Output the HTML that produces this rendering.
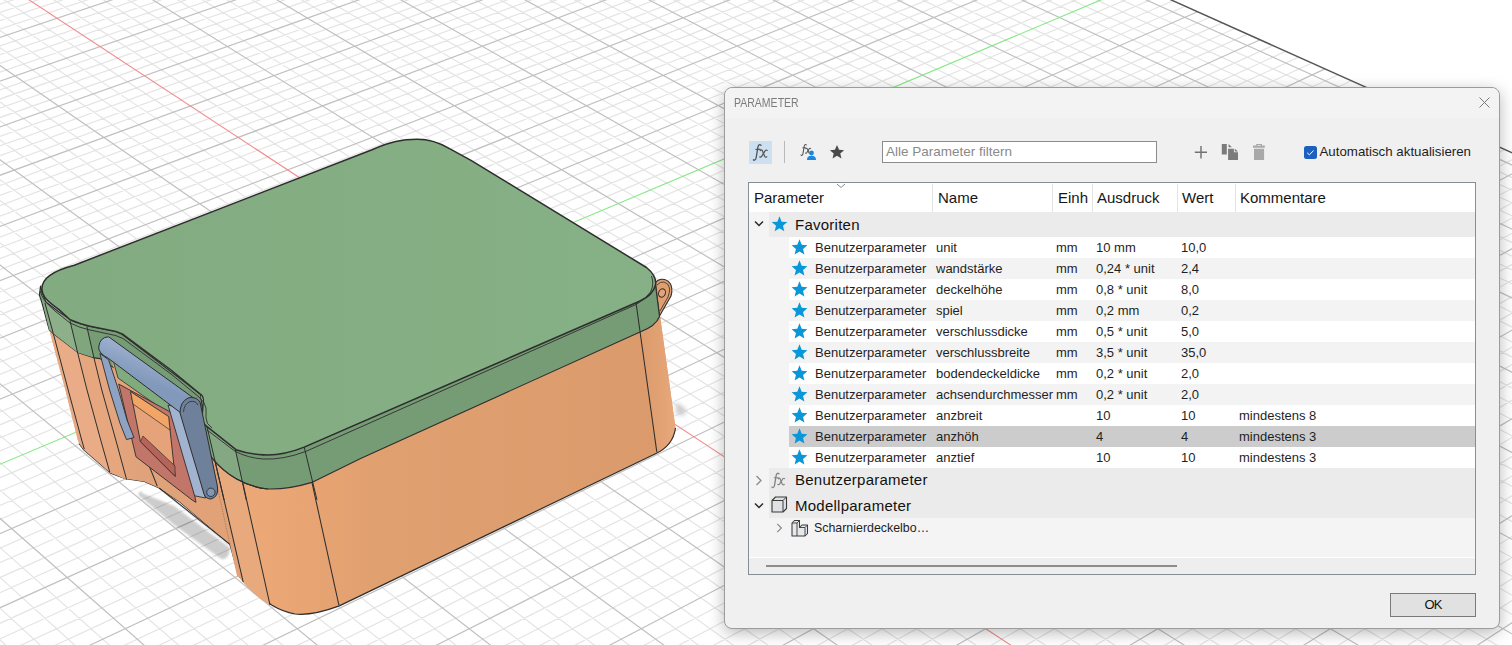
<!DOCTYPE html>
<html><head><meta charset="utf-8"><style>
html,body{margin:0;padding:0;width:1512px;height:645px;overflow:hidden;background:#fff;font-family:"Liberation Sans",sans-serif}
.ab{position:absolute}
svg.ab{overflow:visible}
.scene{position:absolute;left:0;top:0}
.dlg .dbox{}
.t13{font-size:13px;line-height:15px;color:#1f1f1f;white-space:nowrap}
.hd{top:189px;font-size:15px;line-height:17px;color:#161616;white-space:nowrap}
.grp{font-size:15px;letter-spacing:0.25px;line-height:18px;color:#121212;white-space:nowrap}
.sep{top:184px;width:1px;height:28px;background:#e3e3e3}
.fx{font-family:"Liberation Serif",serif;font-style:italic;line-height:20px;white-space:nowrap}
.frame{position:absolute;left:724px;top:87px;width:774px;height:540px;background:#f0f0f0;border:1px solid #9c9c9c;border-radius:8px;box-shadow:0 4px 16px rgba(0,0,0,0.28)}
.titlebar{position:absolute;left:725px;top:88px;width:774px;height:30px;background:#f3f3f3;border-radius:8px 8px 0 0}
.title{position:absolute;left:733.5px;top:95.5px;font-size:12.6px;color:#7c7c7c;line-height:14px;transform:scaleX(0.835);transform-origin:0 0;white-space:nowrap}
</style></head><body>
<svg class="scene" width="1512" height="645" viewBox="0 0 1512 645">
<g fill="none" stroke-width="1">
<path d="M-799.1 177.3L592.9 -259.3M-793.1 184.0L601.4 -255.4M-786.9 190.7L610.0 -251.6M-780.8 197.5L618.7 -247.7M-768.3 211.3L636.2 -239.9M-762.0 218.2L645.0 -235.9M-755.6 225.2L653.8 -231.9M-749.2 232.3L662.7 -227.9M-736.3 246.6L680.7 -219.9M-729.7 253.8L689.8 -215.8M-723.1 261.1L698.9 -211.7M-716.5 268.5L708.1 -207.6M-703.0 283.3L726.6 -199.3M-696.2 290.8L735.9 -195.1M-689.3 298.4L745.3 -190.9M-682.4 306.1L754.8 -186.7M-668.4 321.5L773.8 -178.1M-661.3 329.3L783.4 -173.8M-654.1 337.2L793.1 -169.5M-646.9 345.2L802.9 -165.1M-632.3 361.3L822.5 -156.3M-624.9 369.5L832.4 -151.9M-617.4 377.7L842.4 -147.4M-609.9 386.0L852.5 -142.9M-594.7 402.7L872.7 -133.8M-587.0 411.2L882.9 -129.2M-579.2 419.8L893.2 -124.6M-571.4 428.5L903.6 -120.0M-555.5 446.0L924.5 -110.6M-547.5 454.8L935.0 -105.9M-539.4 463.8L945.7 -101.1M-531.2 472.8L956.4 -96.3M-514.6 491.1L977.9 -86.7M-506.2 500.4L988.8 -81.8M-497.7 509.7L999.8 -76.9M-489.2 519.1L1010.8 -71.9M-471.9 538.3L1033.1 -61.9M-463.1 547.9L1044.4 -56.9M-454.2 557.7L1055.7 -51.8M-445.3 567.6L1067.1 -46.7M-427.1 587.6L1090.1 -36.4M-417.9 597.7L1101.7 -31.2M-408.7 608.0L1113.4 -25.9M-399.3 618.3L1125.2 -20.7M-380.3 639.2L1149.0 -10.0M-370.7 649.8L1161.0 -4.6M-361.0 660.6L1173.1 0.8M-351.2 671.4L1185.3 6.3M-331.2 693.4L1209.9 17.3M-321.1 704.5L1222.3 22.9M-310.9 715.7L1234.9 28.5M-300.6 727.1L1247.5 34.1M-279.7 750.2L1272.9 45.6M-269.1 761.8L1285.8 51.3M-258.4 773.7L1298.8 57.1M-247.6 785.6L1311.8 63.0M-225.7 809.8L1338.2 74.8M-214.5 822.1L1351.5 80.8M-203.2 834.5L1365.0 86.8M-191.9 847.1L1378.5 92.9M-168.7 872.6L1405.8 105.1M-157.0 885.5L1419.6 111.3M-145.1 898.6L1433.6 117.6M-133.2 911.8L1447.6 123.8M-108.8 938.7L1475.9 136.5M-96.4 952.4L1490.2 143.0M-83.9 966.1L1504.7 149.4M-71.3 980.1L1519.2 155.9M-45.6 1008.4L1548.6 169.1M-32.5 1022.8L1563.5 175.8M-19.3 1037.4L1578.5 182.5M-6.0 1052.1L1593.6 189.3M21.2 1082.1L1624.1 203.0M35.0 1097.3L1639.5 209.9M49.0 1112.7L1655.1 216.9M63.1 1128.3L1670.8 223.9M91.8 1160.0L1702.5 238.1M106.5 1176.1L1718.5 245.3M121.3 1192.5L1734.7 252.5M136.2 1209.0L1751.0 259.8M166.7 1242.6L1784.0 274.6M182.2 1259.7L1800.7 282.1M197.9 1277.0L1817.5 289.6M213.8 1294.5L1834.5 297.2M246.1 1330.2L1868.8 312.6M262.6 1348.4L1886.1 320.4M279.3 1366.8L1903.7 328.3M296.2 1385.4L1921.3 336.2M330.6 1423.4L1957.1 352.2M348.2 1442.8L1975.1 360.3M366.0 1462.4L1993.4 368.5M384.0 1482.2L2011.8 376.7M420.7 1522.7L2049.0 393.4M439.4 1543.4L2067.9 401.9M458.4 1564.3L2086.9 410.4M477.6 1585.5L2106.1 419.0M-784.0 164.0L526.6 1585.6M-762.9 157.4L555.8 1564.4M-742.0 150.9L584.6 1543.5M-721.3 144.4L613.1 1523.0M-680.3 131.6L668.9 1482.6M-660.0 125.3L696.2 1462.7M-639.8 119.0L723.2 1443.2M-619.8 112.8L749.9 1423.9M-580.2 100.4L802.3 1386.0M-560.6 94.3L828.0 1367.3M-541.2 88.2L853.3 1349.0M-521.9 82.2L878.4 1330.8M-483.7 70.3L927.6 1295.2M-464.8 64.4L951.8 1277.6M-446.0 58.5L975.7 1260.4M-427.3 52.7L999.3 1243.3M-390.4 41.2L1045.7 1209.7M-372.2 35.5L1068.5 1193.2M-354.0 29.8L1091.0 1176.9M-336.0 24.2L1113.3 1160.7M-300.3 13.1L1157.0 1129.0M-282.7 7.5L1178.5 1113.4M-265.1 2.1L1199.8 1098.0M-247.7 -3.4L1220.9 1082.8M-213.2 -14.1L1262.2 1052.8M-196.1 -19.5L1282.6 1038.1M-179.1 -24.8L1302.7 1023.5M-162.3 -30.0L1322.6 1009.1M-128.9 -40.5L1361.8 980.7M-112.4 -45.6L1381.1 966.8M-95.9 -50.7L1400.1 953.0M-79.6 -55.8L1419.0 939.3M-47.3 -65.9L1456.1 912.4M-31.3 -70.9L1474.4 899.2M-15.4 -75.9L1492.5 886.1M0.4 -80.8L1510.4 873.1M31.7 -90.6L1545.7 847.6M47.2 -95.4L1563.0 835.0M62.7 -100.2L1580.2 822.6M78.0 -105.0L1597.2 810.2M108.3 -114.5L1630.7 786.0M123.3 -119.2L1647.3 774.0M138.3 -123.8L1663.6 762.2M153.1 -128.5L1679.8 750.4M182.6 -137.7L1711.7 727.3M197.1 -142.2L1727.4 715.9M211.6 -146.7L1743.0 704.7M226.0 -151.2L1758.4 693.5M254.6 -160.1L1788.8 671.5M268.7 -164.6L1803.8 660.6M282.8 -168.9L1818.7 649.9M296.7 -173.3L1833.4 639.2M324.4 -181.9L1862.4 618.2M338.2 -186.2L1876.7 607.9M351.8 -190.5L1890.9 597.6M365.4 -194.7L1904.9 587.4M392.3 -203.1L1932.6 567.4M405.6 -207.3L1946.3 557.5M418.8 -211.4L1959.8 547.6M432.0 -215.5L1973.3 537.9M458.1 -223.7L1999.7 518.7M471.1 -227.7L2012.8 509.3M484.0 -231.7L2025.8 499.9M496.8 -235.7L2038.6 490.6M522.1 -243.7L2064.0 472.2M534.7 -247.6L2076.5 463.2M547.2 -251.5L2088.9 454.2M559.7 -255.4L2101.2 445.3M584.4 -263.1L2125.5 427.7" stroke="#e4e4e4" stroke-width="1.2"/>
<path d="M-805.2 170.6L584.4 -263.1M-774.6 204.4L627.4 -243.8M-742.8 239.4L671.7 -223.9M-709.7 275.9L717.3 -203.5M-675.4 313.8L764.3 -182.4M-639.6 353.2L812.7 -160.7M-602.4 394.3L862.6 -138.4M-563.5 437.2L914.0 -115.3M-522.9 481.9L967.1 -91.5M-480.6 528.7L1021.9 -66.9M-436.2 577.5L1078.5 -41.6M-341.2 682.3L1197.6 11.8M-290.3 738.6L1260.2 39.8M-236.7 797.6L1325.0 68.9M-180.4 859.8L1392.1 99.0M-121.0 925.2L1461.7 130.2M-58.5 994.2L1533.9 162.5M7.5 1067.0L1608.8 196.1M77.4 1144.1L1686.6 231.0M151.4 1225.7L1767.4 267.2M229.9 1312.3L1851.5 304.9M313.3 1404.3L1939.1 344.2M402.2 1502.3L2030.3 385.0M497.1 1607.0L2125.5 427.7M-805.2 170.6L497.1 1607.0M-700.7 138.0L641.2 1502.6M-599.9 106.6L776.3 1404.8M-502.7 76.2L903.2 1312.9M-408.8 46.9L1022.6 1226.4M-318.1 18.6L1135.3 1144.8M-230.4 -8.8L1241.7 1067.7M-145.5 -35.3L1342.3 994.9M16.1 -85.7L1528.1 860.3M93.2 -109.8L1614.1 798.0M167.9 -133.1L1695.8 738.8M240.3 -155.7L1773.7 682.4M310.6 -177.6L1848.0 628.7M378.8 -198.9L1918.8 577.3M445.1 -219.6L1986.6 528.3M509.5 -239.7L2051.3 481.4M572.0 -259.2L2113.4 436.4" stroke="#c0c0c0" stroke-width="1.2"/>
<path d="M-63.4 -60.9L1437.7 925.8" stroke="#f28a8a" stroke-width="1.1"/>
<path d="M-389.9 628.7L1137.1 -15.3" stroke="#80e880" stroke-width="1.1"/>
<path d="M584.4 -263.1L2125.5 427.7" stroke="#555" stroke-width="1.4"/>
</g>
<defs>
 <filter id="blur3" x="-20%" y="-20%" width="140%" height="140%"><feGaussianBlur stdDeviation="2"/></filter>
 <filter id="blur2" x="-20%" y="-20%" width="140%" height="140%"><feGaussianBlur stdDeviation="1.3"/></filter>
 <linearGradient id="gTop" x1="0" y1="0" x2="1" y2="0">
  <stop offset="0" stop-color="#83ab81"/><stop offset="1" stop-color="#86b085"/>
 </linearGradient>
 <linearGradient id="gFront" gradientUnits="userSpaceOnUse" x1="240" y1="0" x2="680" y2="0">
  <stop offset="0" stop-color="#eca977"/><stop offset="0.12" stop-color="#eaa574"/><stop offset="0.3" stop-color="#e1a070"/><stop offset="1" stop-color="#db9a6b"/>
 </linearGradient>
 <linearGradient id="gLeft" gradientUnits="userSpaceOnUse" x1="50" y1="0" x2="240" y2="0">
  <stop offset="0" stop-color="#e8ab86"/><stop offset="0.5" stop-color="#e0a27a"/><stop offset="1" stop-color="#e2a278"/>
 </linearGradient>
 <linearGradient id="gBlue" gradientUnits="userSpaceOnUse" x1="140" y1="350" x2="130" y2="375">
  <stop offset="0" stop-color="#9cb0cf"/><stop offset="1" stop-color="#8399bb"/>
 </linearGradient>
 <linearGradient id="gRight" gradientUnits="userSpaceOnUse" x1="640" y1="0" x2="676" y2="0">
  <stop offset="0" stop-color="#dc9b6c"/><stop offset="0.6" stop-color="#e2a273"/><stop offset="1" stop-color="#e8aa7c"/>
 </linearGradient>
</defs>
<!-- ground shadows -->
<path d="M142.5 493.5 Q152 497 174.2 506 L230.1 548 L228.7 554.5 Q226 560 221.3 559 L174.2 525 L138.8 495.6 Q137.5 492 141.8 491.2 Z" fill="#000" fill-opacity="0.2" filter="url(#blur2)"/>
<path d="M676 402 L686 409 L684 416 L676 414 Z" fill="#cdcdcd" filter="url(#blur3)"/>
<!-- body silhouette -->
<path d="M49.1 329.3 L65.4 390 L77.8 440 L79.1 443.3 L83.8 449.8 L110.7 473.1 L125.6 478.7 L144.3 481.5 L159.2 488 L180 502 L230 544.4 L237.7 572.7 Q240 578 243.6 581.6 Q257 595 271.6 605.1 Q283 612 295 614 Q312 616 339.3 605.9 L655 454 Q673 446 675.5 428 L659.6 313 L640 300 L360 420 L240 440 L120 340 Z" fill="url(#gFront)"/>
<path d="M635.8 301.2 L656.8 451.9 Q673 446 675.5 428 L659.6 313 Z" fill="url(#gRight)"/>
<path d="M79.1 443.3 L83.8 449.8 L110.7 473.1 L125.6 478.7 L144.3 481.5 L159.2 488 L180 502 L230 544.4 L237.7 572.7 Q240 578 243.6 581.6 Q257 595 271.6 605.1 Q283 612 295 614 Q312 616 339.3 605.9 L655 454 Q673 446 675.5 428" fill="none" stroke="#2e2e2e" stroke-width="1.2" stroke-linejoin="round"/>
<!-- left face -->
<path d="M49.1 329.3 L65.4 390 L77.8 440 L79.1 443.3 L83.8 449.8 L110.7 473.1 L125.6 478.7 L144.3 481.5 L159.2 488 L180 502 L230 544.4 L237 575.8 L243.2 582 L207 426.7 L95 357 Z" fill="url(#gLeft)"/>
<path d="M207 426.7 L243.2 582 Q255 597 270 605 L235.2 448.8 Z" fill="#e8a97d"/>
<path d="M53.3 333.5 L68.2 390 L81.7 440 L84.3 449 L109.8 472.2 L100.7 440 L87 390 L77.7 353 Z" fill="#e9ac87"/>
<path d="M77.7 353 L87 390 L100.7 440 L109.8 472.2 L126.6 479.6 L115.8 440 L101.8 390 L93.8 357.2 Z" fill="#e6a67e"/>
<!-- vertical edges on body -->
<g stroke="#2e2e2e" stroke-width="1.05" fill="none">
 <path d="M207 426.7 L243.2 582"/>
 <path d="M235.2 448.8 L270 605"/>
 <path d="M304.2 447.1 L338.9 605.2"/>
 <path d="M159.2 488 L230 544.4"/>
 <path d="M140 443 L157.3 486.1"/>
</g>
<!-- hinge tab -->
<path d="M644 266 L650 270 L656 283 L652 290 Z" fill="#e3a173"/>
<path d="M655.5 283 Q657 280 661.5 279.3 Q667 279 670.5 284 Q673 289 671 296 L659.5 316 L657.5 300 Z" fill="#e09f70" stroke="#2e2e2e" stroke-width="1.1" stroke-linejoin="round"/>
<path d="M657 285 Q660 281.5 664 282 Q668.5 283 669.5 288 Q670 292 668 297 L660 311" fill="none" stroke="#2e2e2e" stroke-width="0.8"/>
<ellipse cx="662" cy="293" rx="3.4" ry="4.2" transform="rotate(20 662 293)" fill="#e3a577" stroke="#2e2e2e" stroke-width="1"/>
<path d="M207 440 L230 544.4" stroke="#9a7050" stroke-width="0.7" stroke-dasharray="1.5 1" fill="none"/>
<!-- lid band -->
<path d="M40.5 286 L39.4 295.1 L42 303 L49.1 329.3 L53.3 333.5 L77.7 352.4 L94.5 357.9 L100 358.6 L140 385 L205 446 L212.2 458.2 C225 474 245 487 268 489 C285 489.5 300 486 312.8 482.1 L360.6 458.5 L640 332 Q656 326 659.5 316.5 L655.5 285 L640 300 L304 447 L263 455 L236 450 L204.3 422 L200.4 394 L119 332 L77.7 324 L59 312 L46 302 L42 292 Z" fill="#759c74" stroke="#2e2e2e" stroke-width="1.1" stroke-linejoin="round"/>
<path d="M41.8 299 L49.1 329.3 L53.3 333.5 L44.9 302.8 Z" fill="#89ab87"/>
<path d="M44.9 302.8 L53.3 333.5 L77.7 352.4 L70 320.9 Z" fill="#8daf8a"/>
<path d="M70 320.9 L77.7 352.4 L93.8 357.6 L86.8 326.5 Z" fill="#7fa67d"/>
<path d="M207 426.7 L212.5 458.5 C220 468 230 476 241.5 480.5 L235.2 448.8 Z" fill="#84a882"/>
<path d="M205 446 L212.2 458.2 C225 474 245 487 268 489" fill="none" stroke="#2e2e2e" stroke-width="1.1"/>
<path d="M44.9 302.8 L53.3 333.5 L68.2 390 L81.7 440 L84.3 449 M70 320.9 L77.7 353 L87 390 L100.7 440 L109.8 472.2 M86.8 326.5 L93.8 357.2 L101.8 390 L115.8 440 L126.6 479.6 M235.2 448.8 L246.3 500 M304.2 447.1 L317 500 M207 426.7 L224.1 500" stroke="#2e2e2e" stroke-width="1" fill="none"/>
<path d="M635.8 301.2 L656.8 451.9" stroke="#2e2e2e" stroke-width="1.05" fill="none"/>
<!-- lid top face -->
<path d="M74.3 265.2 L372 149.8 C390 141.5 402 139.3 417 139.3 C430 139.3 439 142.3 450 148.9 L471 160.4 L646.5 267.5 Q657 276 655.5 285 Q653 295 640 301 L304.2 447.1 Q282 456 263.3 454.8 Q248 454 236 449.7 L207 426.7 Q202 423 202.1 417.1 L203.3 399.8 Q203 395 199.6 393.6 L171 370 L122.9 334.3 Q116 331 108.6 330 L90 326.2 Q80 324 70.1 319.7 L59 309.6 C49 302.5 41.9 297 41.9 288.5 C42 279 52 271 74.3 265.2 Z" fill="url(#gTop)" stroke="#2e2e2e" stroke-width="1.5" stroke-linejoin="round"/>
<!-- fillet inner lines -->
<path d="M651.5 276 Q654.5 284 650.5 292 Q646 299 636 304.5 L305.9 451.4 Q283 460 263.3 459 Q248 458 235.2 451.4 L207 430" fill="none" stroke="#2e2e2e" stroke-width="0.9"/>
<path d="M40.3 291 Q42 300 55 311 L70 323 Q80 328 90 330 L108.6 334 Q116 335 123 338.5 L171 374 L199 397 Q205 402 206 408 L206 418 Q206 424 212 428" fill="none" stroke="#2e2e2e" stroke-width="0.9"/>
<!-- latch: inner window area -->
<path d="M112 362 L178 410 L195 500 L140 460 Z" fill="#e6a37a"/>
<path d="M113 360 L176 406 L172 416 L118 378 Z" fill="#7fab7d" stroke="#2e2e2e" stroke-width="0.8"/>
<!-- red frame -->
<path d="M118.7 384 L174 414 L180 420 L196 502.3 L192.4 500.2 L136 456.8 Z M130.6 391.7 L168.6 416.6 L175.1 476.3 L140.4 441.6 Z" fill="#c27569" fill-rule="evenodd" stroke="#2e2e2e" stroke-width="0.9"/>
<path d="M130.6 391.7 L168.6 416.6 L170 430 L133 404 Z" fill="#f2a565" stroke="#2e2e2e" stroke-width="0.7"/>
<path d="M140.4 441.6 L175.1 476.3 L175 466 L143 436 Z" fill="#b5645b" stroke="#2e2e2e" stroke-width="0.7"/>
<!-- left bar -->
<path d="M99.9 353.5 L109.6 390 L120 423.3 L126.5 439.6 L134 437.5 L127 420 L118.5 390 L108.6 359.7 Z" fill="#8ea3c3" stroke="#2e2e2e" stroke-width="0.9"/>
<!-- light strip of right bar -->
<path d="M168 405 L181 408 L205.5 498 L194.6 495.8 Z" fill="#a2b3cf" stroke="#2e2e2e" stroke-width="0.9"/>
<!-- top bar -->
<path d="M108.6 336.8 L193.4 397.9 L181 413 L108.6 358.5 Q98 353 98.7 347 Q100 337 108.6 336.8 Z" fill="url(#gBlue)" stroke="#2e2e2e" stroke-width="1"/>
<!-- right bar -->
<path d="M180 413 Q180 402 188 398 Q196 396 200 402 L217.4 486 Q219 497 211 499 Q206 499 204 494 Z" fill="#6f809b" stroke="#2e2e2e" stroke-width="1"/>
<path d="M183.5 412 Q184 404 190 401.5 Q196 400.5 198 405" fill="none" stroke="#2e2e2e" stroke-width="0.8"/>
<circle cx="210.9" cy="492.3" r="4.2" fill="#8196b5" stroke="#2e2e2e" stroke-width="0.9"/>

</svg>
<div class="frame"></div>
<div class="dlg">
 <div class="titlebar"></div>
 <div class="title">PARAMETER</div>
 <svg class="ab" style="left:1479px;top:97px" width="11" height="11" viewBox="0 0 11 11"><path d="M0.5 0.5L10.5 10.5M10.5 0.5L0.5 10.5" stroke="#737373" stroke-width="0.95"/></svg>
 <!-- toolbar -->
 <div class="ab" style="left:749px;top:141px;width:23px;height:23px;background:#cde0f2"></div>
 <svg class="ab" style="left:749px;top:141px" width="23" height="23" viewBox="0 0 23 23"><g fill="none" stroke="#555" stroke-linecap="round"><path d="M12 4.2 Q10.6 2.9 9.6 4.3 Q9.1 5 8.8 6.8 L7.2 16.5 Q6.8 19 5.4 19.2 Q4.7 19.3 4.4 18.8" stroke-width="1.35"/><path d="M6.9 8.4 H11.2" stroke-width="1.1"/><path d="M11.2 9.6 Q12.4 8.3 13.3 9.6 L15.6 15.3 Q16.4 16.8 17.8 15.8" stroke-width="1.25"/><path d="M18.2 9.4 Q17.3 8.6 16.2 9.6 L12.8 15.2 Q11.9 16.6 10.8 15.9" stroke-width="1.25"/></g></svg>
 <div class="ab" style="left:783.5px;top:141px;width:1.5px;height:22px;background:#b8b8b8"></div>
 <svg class="ab" style="left:798px;top:142px" width="16" height="16" viewBox="0 0 23 23"><g fill="none" stroke="#555" stroke-linecap="round"><path d="M12 4.2 Q10.6 2.9 9.6 4.3 Q9.1 5 8.8 6.8 L7.2 16.5 Q6.8 19 5.4 19.2 Q4.7 19.3 4.4 18.8" stroke-width="1.6"/><path d="M6.9 8.4 H11.2" stroke-width="1.4"/><path d="M11.2 9.6 Q12.4 8.3 13.3 9.6 L15.6 15.3 Q16.4 16.8 17.8 15.8" stroke-width="1.5"/><path d="M18.2 9.4 Q17.3 8.6 16.2 9.6 L12.8 15.2 Q11.9 16.6 10.8 15.9" stroke-width="1.5"/></g></svg>
 <svg class="ab" style="left:806px;top:150px" width="11" height="10" viewBox="0 0 11 10"><circle cx="5.5" cy="3" r="2.4" fill="#1a88e0"/><path d="M1 10 Q1 5.8 5.5 5.8 Q10 5.8 10 10 Z" fill="#1a88e0"/></svg>
 <svg class="ab" style="left:829px;top:144px" width="16" height="16" viewBox="0 0 24 24"><path d="M12 1.5l3.1 7.2 7.6.6-5.8 5 1.8 7.5L12 17.8l-6.7 4 1.8-7.5-5.8-5 7.6-.6z" fill="#4a4a4a"/></svg>
 <div class="ab" style="left:882px;top:141px;width:273px;height:20px;background:#fff;border:1px solid #8c8c8c"></div>
 <div class="ab t13" style="left:886px;top:144px;color:#8a8a8a;font-size:13.5px">Alle Parameter filtern</div>
 <svg class="ab" style="left:1194px;top:145px" width="14" height="14" viewBox="0 0 14 14"><path d="M7 1V13.5M0.8 7.2H13" stroke="#727272" stroke-width="1.45"/></svg>
 <svg class="ab" style="left:0;top:0" width="1" height="1"><path d="M1221.8 144H1226.8V154.6H1221.8Z M1228.6 144L1231.9 147.2H1228.6Z M1228.1 148.8H1233.9V152.2H1238V160H1228.1Z M1234.8 148.8L1238 151.4H1234.8Z" fill="#7b7b7b"/></svg>
 <svg class="ab" style="left:0;top:0" width="1" height="1"><path d="M1256.2 144H1262V145.6H1264.8V147.8H1253V145.6H1256.2Z M1254 148.8H1264.1V160H1254Z" fill="#a9a9a9"/><path d="M1257.4 145.1H1260.8V145.8H1257.4Z" fill="#f0f0f0"/></svg>
 <div class="ab" style="left:1304px;top:145.5px;width:13px;height:13px;background:#1d5fbd;border-radius:2.5px"></div>
 <svg class="ab" style="left:1304px;top:145.5px" width="13" height="13" viewBox="0 0 13 13"><path d="M3.2 6.8L5.3 8.8L9.6 4.6" stroke="#fff" stroke-width="1" fill="none"/></svg>
 <div class="ab t13" style="left:1319.5px;top:143.5px;color:#1e1e1e;font-size:13.3px">Automatisch aktualisieren</div>
 <!-- table -->
 <div class="ab" style="left:748px;top:182px;width:726px;height:391px;background:#f4f4f4;border:1px solid #858d96"></div>
 <div class="ab" style="left:749px;top:183px;width:726px;height:29px;background:#fff"></div>
 <svg class="ab" style="left:836px;top:183px" width="10" height="6" viewBox="0 0 10 6"><path d="M1 1L5 4.5L9 1" stroke="#8a8a8a" stroke-width="1" fill="none"/></svg>
 <div class="ab sep" style="left:932px"></div>
 <div class="ab sep" style="left:1052px"></div>
 <div class="ab sep" style="left:1092px"></div>
 <div class="ab sep" style="left:1177px"></div>
 <div class="ab sep" style="left:1235px"></div>
 <div class="ab hd" style="left:754px">Parameter</div>
 <div class="ab hd" style="left:938px">Name</div>
 <div class="ab hd" style="left:1058px">Einh</div>
 <div class="ab hd" style="left:1097px">Ausdruck</div>
 <div class="ab hd" style="left:1182px">Wert</div>
 <div class="ab hd" style="left:1240px">Kommentare</div>
 <!-- Favoriten group -->
 <div class="ab" style="left:769px;top:212px;width:706px;height:25px;background:#ebebeb"></div>
 <svg class="ab" style="left:754px;top:220px" width="10" height="8" viewBox="0 0 10 8"><path d="M1 1.5L5 5.5L9 1.5" stroke="#2a2a2a" stroke-width="1.5" fill="none"/></svg>
 <svg class="ab" style="left:771px;top:216px" width="17" height="16" viewBox="0 0 24 23"><path d="M12 0.5l3.1 7.6 8.1.6-6.2 5.3 1.9 8L12 17.7l-6.9 4.3 1.9-8L0.8 8.7l8.1-.6z" fill="#0b96d8"/></svg>
 <div class="ab grp" style="left:795px;top:216px">Favoriten</div>
 <div class="ab" style="left:789px;top:237.0px;width:686px;height:21.0px;background:#fff"></div>
 <svg class="ab" style="left:790.5px;top:239.3px" width="17" height="16.3" viewBox="0 0 24 23"><path d="M12 0.5l3.1 7.6 8.1.6-6.2 5.3 1.9 8L12 17.7l-6.9 4.3 1.9-8L0.8 8.7l8.1-.6z" fill="#0b96d8"/></svg>
 <div class="ab t13" style="left:815px;top:240.2px">Benutzerparameter</div>
 <div class="ab t13" style="left:936px;top:240.2px">unit</div>
 <div class="ab t13" style="left:1056px;top:240.2px">mm</div>
 <div class="ab t13" style="left:1096px;top:240.2px">10 mm</div>
 <div class="ab t13" style="left:1181px;top:240.2px">10,0</div>
 <div class="ab" style="left:789px;top:258.0px;width:686px;height:21.0px;background:#f3f3f3"></div>
 <svg class="ab" style="left:790.5px;top:260.3px" width="17" height="16.3" viewBox="0 0 24 23"><path d="M12 0.5l3.1 7.6 8.1.6-6.2 5.3 1.9 8L12 17.7l-6.9 4.3 1.9-8L0.8 8.7l8.1-.6z" fill="#0b96d8"/></svg>
 <div class="ab t13" style="left:815px;top:261.2px">Benutzerparameter</div>
 <div class="ab t13" style="left:936px;top:261.2px">wandstärke</div>
 <div class="ab t13" style="left:1056px;top:261.2px">mm</div>
 <div class="ab t13" style="left:1096px;top:261.2px">0,24 * unit</div>
 <div class="ab t13" style="left:1181px;top:261.2px">2,4</div>
 <div class="ab" style="left:789px;top:279.0px;width:686px;height:21.0px;background:#fff"></div>
 <svg class="ab" style="left:790.5px;top:281.3px" width="17" height="16.3" viewBox="0 0 24 23"><path d="M12 0.5l3.1 7.6 8.1.6-6.2 5.3 1.9 8L12 17.7l-6.9 4.3 1.9-8L0.8 8.7l8.1-.6z" fill="#0b96d8"/></svg>
 <div class="ab t13" style="left:815px;top:282.2px">Benutzerparameter</div>
 <div class="ab t13" style="left:936px;top:282.2px">deckelhöhe</div>
 <div class="ab t13" style="left:1056px;top:282.2px">mm</div>
 <div class="ab t13" style="left:1096px;top:282.2px">0,8 * unit</div>
 <div class="ab t13" style="left:1181px;top:282.2px">8,0</div>
 <div class="ab" style="left:789px;top:300.0px;width:686px;height:21.0px;background:#f3f3f3"></div>
 <svg class="ab" style="left:790.5px;top:302.3px" width="17" height="16.3" viewBox="0 0 24 23"><path d="M12 0.5l3.1 7.6 8.1.6-6.2 5.3 1.9 8L12 17.7l-6.9 4.3 1.9-8L0.8 8.7l8.1-.6z" fill="#0b96d8"/></svg>
 <div class="ab t13" style="left:815px;top:303.2px">Benutzerparameter</div>
 <div class="ab t13" style="left:936px;top:303.2px">spiel</div>
 <div class="ab t13" style="left:1056px;top:303.2px">mm</div>
 <div class="ab t13" style="left:1096px;top:303.2px">0,2 mm</div>
 <div class="ab t13" style="left:1181px;top:303.2px">0,2</div>
 <div class="ab" style="left:789px;top:321.0px;width:686px;height:21.0px;background:#fff"></div>
 <svg class="ab" style="left:790.5px;top:323.3px" width="17" height="16.3" viewBox="0 0 24 23"><path d="M12 0.5l3.1 7.6 8.1.6-6.2 5.3 1.9 8L12 17.7l-6.9 4.3 1.9-8L0.8 8.7l8.1-.6z" fill="#0b96d8"/></svg>
 <div class="ab t13" style="left:815px;top:324.2px">Benutzerparameter</div>
 <div class="ab t13" style="left:936px;top:324.2px">verschlussdicke</div>
 <div class="ab t13" style="left:1056px;top:324.2px">mm</div>
 <div class="ab t13" style="left:1096px;top:324.2px">0,5 * unit</div>
 <div class="ab t13" style="left:1181px;top:324.2px">5,0</div>
 <div class="ab" style="left:789px;top:342.0px;width:686px;height:21.0px;background:#f3f3f3"></div>
 <svg class="ab" style="left:790.5px;top:344.3px" width="17" height="16.3" viewBox="0 0 24 23"><path d="M12 0.5l3.1 7.6 8.1.6-6.2 5.3 1.9 8L12 17.7l-6.9 4.3 1.9-8L0.8 8.7l8.1-.6z" fill="#0b96d8"/></svg>
 <div class="ab t13" style="left:815px;top:345.2px">Benutzerparameter</div>
 <div class="ab t13" style="left:936px;top:345.2px">verschlussbreite</div>
 <div class="ab t13" style="left:1056px;top:345.2px">mm</div>
 <div class="ab t13" style="left:1096px;top:345.2px">3,5 * unit</div>
 <div class="ab t13" style="left:1181px;top:345.2px">35,0</div>
 <div class="ab" style="left:789px;top:363.0px;width:686px;height:21.0px;background:#fff"></div>
 <svg class="ab" style="left:790.5px;top:365.3px" width="17" height="16.3" viewBox="0 0 24 23"><path d="M12 0.5l3.1 7.6 8.1.6-6.2 5.3 1.9 8L12 17.7l-6.9 4.3 1.9-8L0.8 8.7l8.1-.6z" fill="#0b96d8"/></svg>
 <div class="ab t13" style="left:815px;top:366.2px">Benutzerparameter</div>
 <div class="ab t13" style="left:936px;top:366.2px">bodendeckeldicke</div>
 <div class="ab t13" style="left:1056px;top:366.2px">mm</div>
 <div class="ab t13" style="left:1096px;top:366.2px">0,2 * unit</div>
 <div class="ab t13" style="left:1181px;top:366.2px">2,0</div>
 <div class="ab" style="left:789px;top:384.0px;width:686px;height:21.0px;background:#f3f3f3"></div>
 <svg class="ab" style="left:790.5px;top:386.3px" width="17" height="16.3" viewBox="0 0 24 23"><path d="M12 0.5l3.1 7.6 8.1.6-6.2 5.3 1.9 8L12 17.7l-6.9 4.3 1.9-8L0.8 8.7l8.1-.6z" fill="#0b96d8"/></svg>
 <div class="ab t13" style="left:815px;top:387.2px">Benutzerparameter</div>
 <div class="ab t13" style="left:936px;top:387.2px">achsendurchmesser</div>
 <div class="ab t13" style="left:1056px;top:387.2px">mm</div>
 <div class="ab t13" style="left:1096px;top:387.2px">0,2 * unit</div>
 <div class="ab t13" style="left:1181px;top:387.2px">2,0</div>
 <div class="ab" style="left:789px;top:405.0px;width:686px;height:21.0px;background:#fff"></div>
 <svg class="ab" style="left:790.5px;top:407.3px" width="17" height="16.3" viewBox="0 0 24 23"><path d="M12 0.5l3.1 7.6 8.1.6-6.2 5.3 1.9 8L12 17.7l-6.9 4.3 1.9-8L0.8 8.7l8.1-.6z" fill="#0b96d8"/></svg>
 <div class="ab t13" style="left:815px;top:408.2px">Benutzerparameter</div>
 <div class="ab t13" style="left:936px;top:408.2px">anzbreit</div>
 <div class="ab t13" style="left:1096px;top:408.2px">10</div>
 <div class="ab t13" style="left:1181px;top:408.2px">10</div>
 <div class="ab t13" style="left:1239px;top:408.2px">mindestens 8</div>
 <div class="ab" style="left:789px;top:426.0px;width:686px;height:21.0px;background:#cccccc"></div>
 <svg class="ab" style="left:790.5px;top:428.3px" width="17" height="16.3" viewBox="0 0 24 23"><path d="M12 0.5l3.1 7.6 8.1.6-6.2 5.3 1.9 8L12 17.7l-6.9 4.3 1.9-8L0.8 8.7l8.1-.6z" fill="#0b96d8"/></svg>
 <div class="ab t13" style="left:815px;top:429.2px">Benutzerparameter</div>
 <div class="ab t13" style="left:936px;top:429.2px">anzhöh</div>
 <div class="ab t13" style="left:1096px;top:429.2px">4</div>
 <div class="ab t13" style="left:1181px;top:429.2px">4</div>
 <div class="ab t13" style="left:1239px;top:429.2px">mindestens 3</div>
 <div class="ab" style="left:789px;top:447.0px;width:686px;height:21.0px;background:#fff"></div>
 <svg class="ab" style="left:790.5px;top:449.3px" width="17" height="16.3" viewBox="0 0 24 23"><path d="M12 0.5l3.1 7.6 8.1.6-6.2 5.3 1.9 8L12 17.7l-6.9 4.3 1.9-8L0.8 8.7l8.1-.6z" fill="#0b96d8"/></svg>
 <div class="ab t13" style="left:815px;top:450.2px">Benutzerparameter</div>
 <div class="ab t13" style="left:936px;top:450.2px">anztief</div>
 <div class="ab t13" style="left:1096px;top:450.2px">10</div>
 <div class="ab t13" style="left:1181px;top:450.2px">10</div>
 <div class="ab t13" style="left:1239px;top:450.2px">mindestens 3</div>
 <!-- Benutzerparameter group -->
 <div class="ab" style="left:769px;top:468px;width:706px;height:49.5px;background:#ebebeb"></div>
 <svg class="ab" style="left:755px;top:475px" width="8" height="11" viewBox="0 0 8 11"><path d="M1.5 1L6 5.5L1.5 10" stroke="#8a8a8a" stroke-width="1.3" fill="none"/></svg>
 <svg class="ab" style="left:768px;top:470px" width="21" height="21" viewBox="0 0 23 23"><g fill="none" stroke="#808080" stroke-linecap="round"><path d="M12 4.2 Q10.6 2.9 9.6 4.3 Q9.1 5 8.8 6.8 L7.2 16.5 Q6.8 19 5.4 19.2 Q4.7 19.3 4.4 18.8" stroke-width="1.4"/><path d="M6.9 8.4 H11.2" stroke-width="1.15"/><path d="M11.2 9.6 Q12.4 8.3 13.3 9.6 L15.6 15.3 Q16.4 16.8 17.8 15.8" stroke-width="1.3"/><path d="M18.2 9.4 Q17.3 8.6 16.2 9.6 L12.8 15.2 Q11.9 16.6 10.8 15.9" stroke-width="1.3"/></g></svg>
 <div class="ab grp" style="left:795px;top:471px">Benutzerparameter</div>
 <svg class="ab" style="left:754px;top:502px" width="10" height="8" viewBox="0 0 10 8"><path d="M1 1.5L5 5.5L9 1.5" stroke="#2a2a2a" stroke-width="1.5" fill="none"/></svg>
 <svg class="ab" style="left:771px;top:496px" width="17" height="17" viewBox="0 0 17 17"><path d="M1 4.5L4.5 1H15.5V12.5L12 16H1Z" fill="#dfe1e5" stroke="#3a3a3a" stroke-width="1.1" stroke-linejoin="round"/><path d="M1 4.5H12V16M12 4.5L15.5 1" fill="none" stroke="#3a3a3a" stroke-width="1"/></svg>
 <div class="ab grp" style="left:795px;top:497px">Modellparameter</div>
 <svg class="ab" style="left:776px;top:523px" width="7" height="10" viewBox="0 0 7 10"><path d="M1.2 0.8L5.4 5L1.2 9.2" stroke="#8a8a8a" stroke-width="1.2" fill="none"/></svg>
 <svg class="ab" style="left:791px;top:519px" width="18" height="18" viewBox="0 0 18 18"><path d="M1 4L3.5 1.5H8.5V8.5L11 6H16.5V14.5L14 17H1Z" fill="#e6e8ec" stroke="#3a3a3a" stroke-width="1.05" stroke-linejoin="round"/><path d="M1 4H6V17M6 4L8.5 1.5M8.5 8.5H14V17M14 8.5L16.5 6" fill="none" stroke="#3a3a3a" stroke-width="0.9"/></svg>
 <div class="ab t13" style="left:814px;top:521px;font-size:12.4px">Scharnierdeckelbo…</div>
 <!-- scrollbar area -->
 <div class="ab" style="left:749px;top:557px;width:726px;height:1px;background:#fff"></div>
 <div class="ab" style="left:749px;top:558px;width:726px;height:15.5px;background:#eeeeee"></div>
 <div class="ab" style="left:766px;top:564.5px;width:411px;height:2.5px;background:#8d8d8d"></div>
 <!-- OK -->
 <div class="ab" style="left:1390px;top:593px;width:84px;height:22px;background:#e1e1e1;border:1px solid #7a7a7a"></div>
 <div class="ab t13" style="left:1390px;top:596.5px;width:86px;text-align:center;color:#111;letter-spacing:-0.8px">OK</div>
</div>

</body></html>
